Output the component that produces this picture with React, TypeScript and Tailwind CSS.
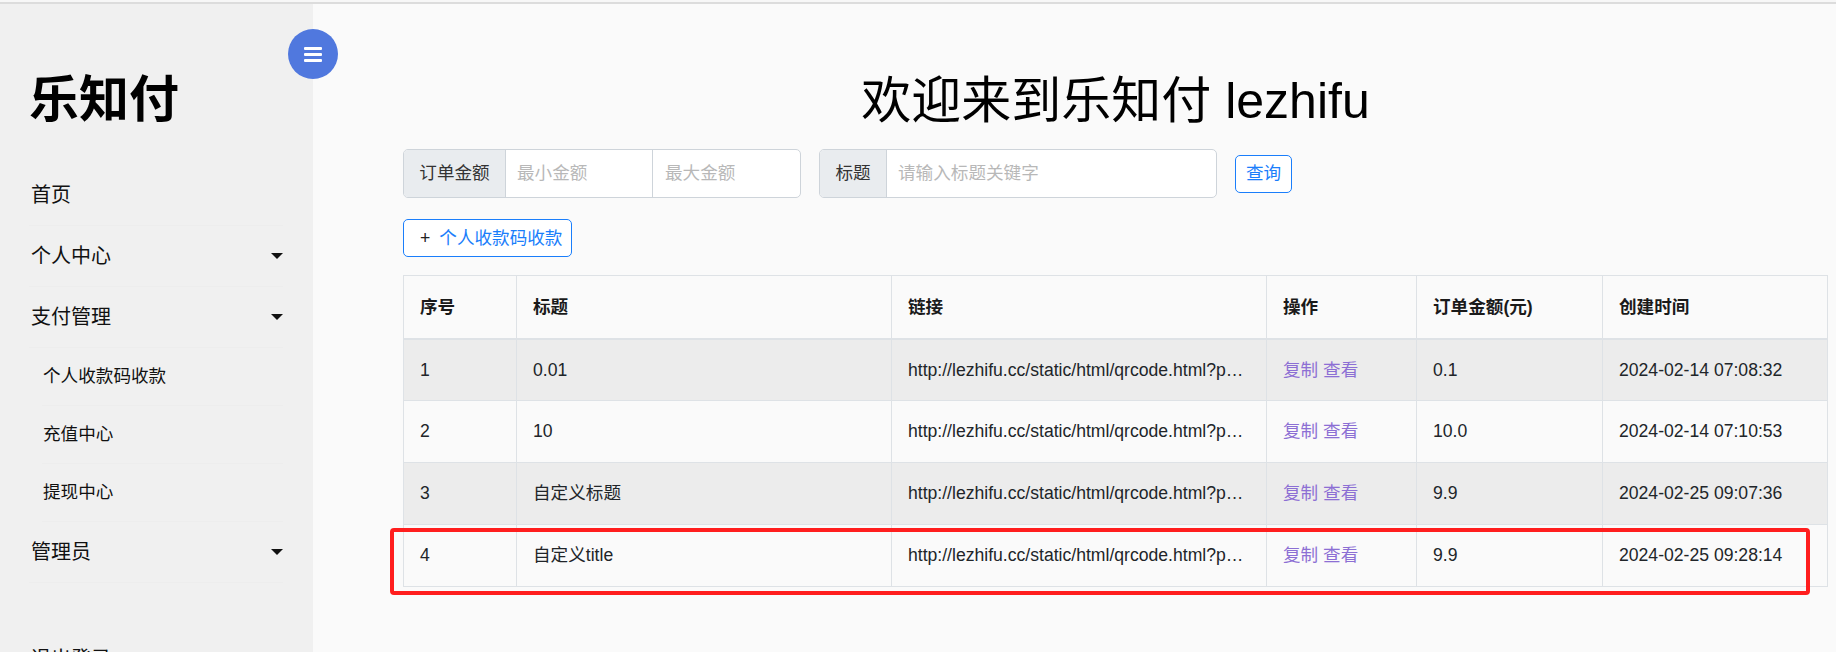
import React from "react";

interface NavItemProps {
  label: string;
  caret?: boolean;
  sub?: boolean;
}

const NavItem = ({ label, caret, sub }: NavItemProps) => {
  if (sub) {
    return (
      <div className="ml-[13px] h-[58px] flex items-center pl-[1px] border-b border-[#ededed] text-[17.6px] text-[#111]">
        {label}
      </div>
    );
  }
  return (
    <div className="h-[61px] flex items-center justify-between pl-[2px] border-b border-[#ededed] text-[20px] text-[#111]">
      <span>{label}</span>
      {caret && (
        <span className="w-0 h-0 border-t-[6px] border-t-[#111] border-x-[6px] border-x-transparent" />
      )}
    </div>
  );
};

const rows = [
  { id: 1, title: "0.01", amount: "0.1", time: "2024-02-14 07:08:32" },
  { id: 2, title: "10", amount: "10.0", time: "2024-02-14 07:10:53" },
  { id: 3, title: "自定义标题", amount: "9.9", time: "2024-02-25 09:07:36" },
  { id: 4, title: "自定义title", amount: "9.9", time: "2024-02-25 09:28:14" },
];

const link = "http://lezhifu.cc/static/html/qrcode.html?pay_id=lezhifu";

export default function App() {
  return (
    <div className="relative w-[1836px] h-[652px] overflow-hidden bg-[#fafafa] text-[#212529] font-['Liberation_Sans','Noto_Sans_CJK_SC',sans-serif]">
      <div className="h-[2px] bg-[#f7f7f7]" />
      <div className="h-[2px] bg-[#dcdcdc]" />
      <div className="flex h-[648px]">
        {/* sidebar */}
        <aside className="w-[313px] shrink-0 bg-[#f0f0f0] pl-[29px] pr-[30px] pt-[71px]">
          <div className="h-[50px] leading-none text-[50px] font-bold text-black">
            乐知付
          </div>
          <nav className="mt-[40px]">
            <NavItem label="首页" />
            <NavItem label="个人中心" caret />
            <NavItem label="支付管理" caret />
            <NavItem label="个人收款码收款" sub />
            <NavItem label="充值中心" sub />
            <NavItem label="提现中心" sub />
            <NavItem label="管理员" caret />
            <div className="mt-[45px] h-[61px] flex items-center pl-[2px] text-[20px] text-[#111]">
              退出登录
            </div>
          </nav>
        </aside>

        {/* main */}
        <main className="flex-1 pl-[90px] pr-[8px]">
          <h1 className="mt-[67px] h-[60px] text-center text-[50px] leading-[1.2] text-black">
            欢迎来到乐知付 lezhifu
          </h1>

          <div className="mt-[18px] flex items-center h-[49px] text-[17.6px]">
            <div className="flex h-[49px] border border-[#ced4da] rounded-[5px] overflow-hidden bg-white">
              <div className="w-[101px] flex items-center justify-center bg-[#e9ecef] text-[#333]">
                订单金额
              </div>
              <input
                className="w-[147px] h-full px-[11px] border-l border-[#ced4da] outline-none placeholder:text-[#b8b8b8]"
                placeholder="最小金额"
              />
              <input
                className="w-[148px] h-full px-[12px] border-l border-[#ced4da] outline-none placeholder:text-[#b8b8b8]"
                placeholder="最大金额"
              />
            </div>
            <div className="ml-[18px] flex h-[49px] border border-[#ced4da] rounded-[5px] overflow-hidden bg-white">
              <div className="w-[66px] flex items-center justify-center bg-[#e9ecef] text-[#333]">
                标题
              </div>
              <input
                className="w-[330px] h-full px-[11px] border-l border-[#ced4da] outline-none placeholder:text-[#b8b8b8]"
                placeholder="请输入标题关键字"
              />
            </div>
            <button className="ml-[18px] h-[38px] w-[57px] border border-[#1a7efb] rounded-[5px] text-[#1a7efb] bg-white">
              查询
            </button>
          </div>

          <button className="mt-[21px] h-[38px] w-[169px] flex items-center pl-[16px] border border-[#1a7efb] rounded-[5px] text-[17.6px] bg-white">
            <span className="text-[#222]">+</span>
            <span className="ml-[9px] text-[#1a7efb]">个人收款码收款</span>
          </button>

          <table className="mt-[18px] table-fixed border-collapse w-[1424px] text-[17.6px]">
            <colgroup>
              <col className="w-[113px]" />
              <col className="w-[375px]" />
              <col className="w-[375px]" />
              <col className="w-[150px]" />
              <col className="w-[186px]" />
              <col className="w-[225px]" />
            </colgroup>
            <thead>
              <tr className="h-[63px] bg-[#fafafa]">
                {["序号", "标题", "链接", "操作", "订单金额(元)", "创建时间"].map((h) => (
                  <th
                    key={h}
                    className="border border-[#dee2e6] border-b-2 px-[16px] text-left font-bold text-[#1a1a1a]"
                  >
                    {h}
                  </th>
                ))}
              </tr>
            </thead>
            <tbody>
              {rows.map((r) => (
                <tr
                  key={r.id}
                  className={r.id % 2 === 1 ? "h-[62px] bg-[#ececec]" : "h-[62px] bg-[#fafafa]"}
                >
                  <td className="border border-[#dee2e6] px-[16px]">{r.id}</td>
                  <td className="border border-[#dee2e6] px-[16px]">{r.title}</td>
                  <td className="border border-[#dee2e6] px-[16px] whitespace-nowrap overflow-hidden text-ellipsis">
                    {link}
                  </td>
                  <td className="border border-[#dee2e6] px-[16px] whitespace-nowrap text-[#8c6fd4]">复制 查看</td>
                  <td className="border border-[#dee2e6] px-[16px]">{r.amount}</td>
                  <td className="border border-[#dee2e6] px-[16px]">{r.time}</td>
                </tr>
              ))}
            </tbody>
          </table>
        </main>
      </div>

      {/* sidebar toggle */}
      <button className="absolute left-[288px] top-[29px] w-[50px] h-[50px] rounded-full bg-[#5078de] flex items-center justify-center">
        <svg width="18" height="15" viewBox="0 0 18 15">
          <rect x="0" y="0" width="18" height="3" rx="1" fill="#fff" />
          <rect x="0" y="6" width="18" height="3" rx="1" fill="#fff" />
          <rect x="0" y="12" width="18" height="3" rx="1" fill="#fff" />
        </svg>
      </button>

      {/* red highlight annotation */}
      <div className="absolute left-[390px] top-[528px] w-[1420px] h-[67px] border-[4px] border-[#ff1e1e] rounded-[4px] pointer-events-none" />
    </div>
  );
}
